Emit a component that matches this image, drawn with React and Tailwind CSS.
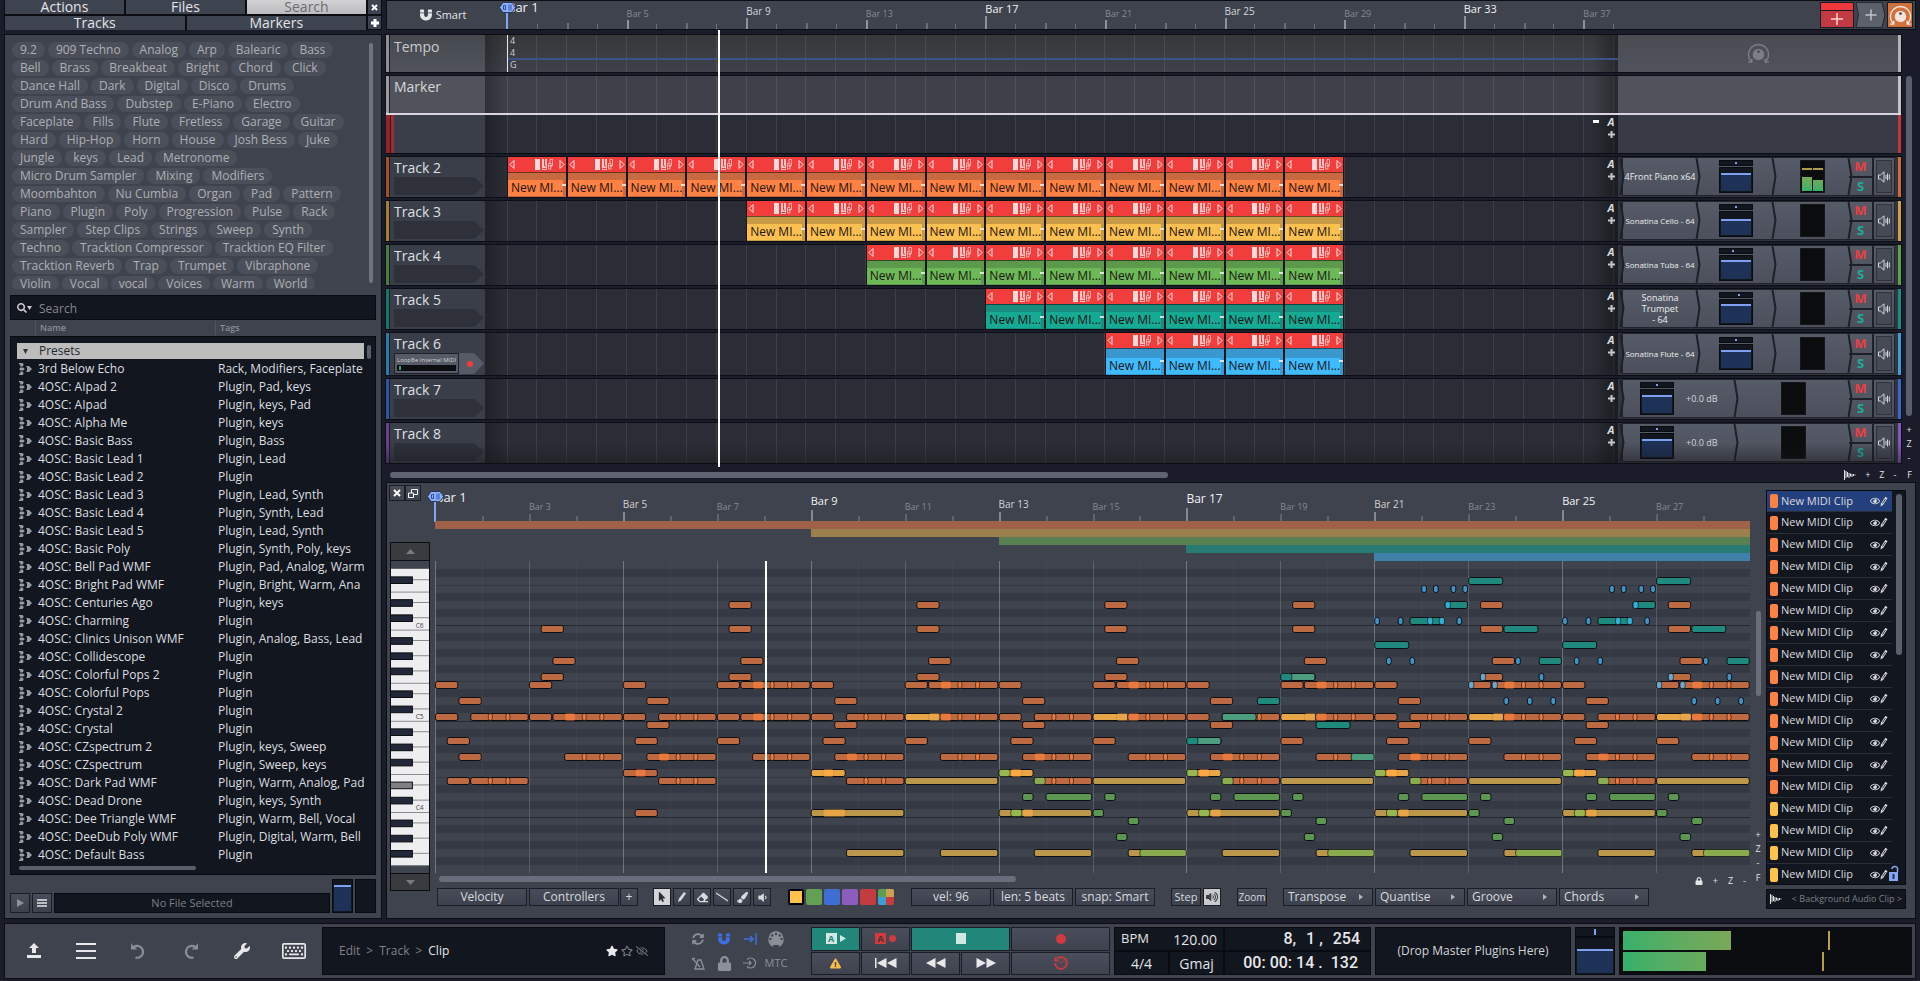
import React from "react";
import {
  FaSearch, FaStar, FaRegStar, FaRegEyeSlash, FaRegKeyboard, FaWrench, FaLock,
  FaExclamationTriangle, FaRegEye, FaEraser,
  FaPaintBrush, FaVolumeDown, FaVolumeUp, FaMousePointer, FaMagnet, FaSyncAlt,
} from "react-icons/fa";

const TAGS = [
  ["9.2", "909 Techno", "Analog", "Arp", "Balearic", "Bass"],
  ["Bell", "Brass", "Breakbeat", "Bright", "Chord", "Click"],
  ["Dance Hall", "Dark", "Digital", "Disco", "Drums"],
  ["Drum And Bass", "Dubstep", "E-Piano", "Electro"],
  ["Faceplate", "Fills", "Flute", "Fretless", "Garage", "Guitar"],
  ["Hard", "Hip-Hop", "Horn", "House", "Josh Bess", "Juke"],
  ["Jungle", "keys", "Lead", "Metronome"],
  ["Micro Drum Sampler", "Mixing", "Modifiers"],
  ["Moombahton", "Nu Cumbia", "Organ", "Pad", "Pattern"],
  ["Piano", "Plugin", "Poly", "Progression", "Pulse", "Rack"],
  ["Sampler", "Step Clips", "Strings", "Sweep", "Synth"],
  ["Techno", "Tracktion Compressor", "Tracktion EQ Filter"],
  ["Tracktion Reverb", "Trap", "Trumpet", "Vibraphone"],
  ["Violin", "Vocal", "vocal", "Voices", "Warm", "World"],
];

const PRESETS = [
  ["3rd Below Echo", "Rack, Modifiers, Faceplate"],
  ["4OSC: AIpad 2", "Plugin, Pad, keys"],
  ["4OSC: AIpad", "Plugin, keys, Pad"],
  ["4OSC: Alpha Me", "Plugin, keys"],
  ["4OSC: Basic Bass", "Plugin, Bass"],
  ["4OSC: Basic Lead 1", "Plugin, Lead"],
  ["4OSC: Basic Lead 2", "Plugin"],
  ["4OSC: Basic Lead 3", "Plugin, Lead, Synth"],
  ["4OSC: Basic Lead 4", "Plugin, Synth, Lead"],
  ["4OSC: Basic Lead 5", "Plugin, Lead, Synth"],
  ["4OSC: Basic Poly", "Plugin, Synth, Poly, keys"],
  ["4OSC: Bell Pad WMF", "Plugin, Pad, Analog, Warm"],
  ["4OSC: Bright Pad WMF", "Plugin, Bright, Warm, Ana"],
  ["4OSC: Centuries Ago", "Plugin, keys"],
  ["4OSC: Charming", "Plugin"],
  ["4OSC: Clinics Unison WMF", "Plugin, Analog, Bass, Lead"],
  ["4OSC: Collidescope", "Plugin"],
  ["4OSC: Colorful Pops 2", "Plugin"],
  ["4OSC: Colorful Pops", "Plugin"],
  ["4OSC: Crystal 2", "Plugin"],
  ["4OSC: Crystal", "Plugin"],
  ["4OSC: CZspectrum 2", "Plugin, keys, Sweep"],
  ["4OSC: CZspectrum", "Plugin, Sweep, keys"],
  ["4OSC: Dark Pad WMF", "Plugin, Warm, Analog, Pad"],
  ["4OSC: Dead Drone", "Plugin, keys, Synth"],
  ["4OSC: Dee Triangle WMF", "Plugin, Warm, Bell, Vocal"],
  ["4OSC: DeeDub Poly WMF", "Plugin, Digital, Warm, Bell"],
  ["4OSC: Default Bass", "Plugin"],
];

const BTN = "flex items-center justify-center border border-[#1a1c26] bg-linear-to-b from-[#484d5a] to-[#3d414d] text-[#d8dade]";
const WELL = "border border-[#090b11] bg-[#12161e]";

/* ---------- Browser panel ---------- */

function TabButton({ children, active }) {
  return (
    <button
      className={
        "h-[14px] flex-1 text-[14px] leading-[14px] " +
        (active ? "bg-linear-to-b from-[#d2d2d4] to-[#bcbcbe] text-[#6b6c70]" : "bg-[#3e4350] text-[#e3e4e7]")
      }
    >
      {children}
    </button>
  );
}

function PresetIcon() {
  return (
    <svg width="14" height="12" viewBox="0 0 14 12" fill="#9a9ca2">
      <path d="M1 0H4C6 .2 6 3 4.200 3.600H2.200V1.500H1z" />
      <path d="M2.500 4.400H5C7 5 7 7 5 7.600H2.500C1.200 7 1.200 5 2.500 4.400z" />
      <path d="M1 12H4C6 11.800 6 9 4.200 8.400H2.200V10.500H1z" />
      <path d="M8 3H11L14 6L11 9H8C9.500 7.500 9.500 4.500 8 3z" />
    </svg>
  );
}

function Browser() {
  return (
    <aside className="flex w-[378px] shrink-0 flex-col">
      <nav className="mb-1 flex flex-col gap-[2px] bg-[#0b0d13] px-px pb-px">
        <div className="flex gap-[2px]">
          <TabButton>Actions</TabButton>
          <TabButton>Files</TabButton>
          <TabButton active>Search</TabButton>
          <button aria-label="Close" className="flex h-[14px] w-[13px] items-center justify-center bg-[#3e4350]">
            <svg width="7" height="7" viewBox="0 0 7 7"><path d="M1 1L6 6M6 1L1 6" stroke="#fff" strokeWidth="2" /></svg>
          </button>
        </div>
        <div className="flex h-[13px] gap-[2px]">
          <TabButton>Tracks</TabButton>
          <TabButton>Markers</TabButton>
          <button aria-label="Add" className="flex h-[13px] w-[13px] items-center justify-center bg-[#3e4350]">
            <svg width="8" height="8" viewBox="0 0 8 8"><path d="M4 0V8M0 4H8" stroke="#fff" strokeWidth="3" /></svg>
          </button>
        </div>
      </nav>
      <div className="flex flex-1 flex-col border border-[#0b0d13] bg-[#3e434e] px-[5px] pt-[7px] pb-1">
        <div className="flex h-[247px] overflow-hidden">
          <div className="flex flex-1 flex-col gap-[2px] pl-[2px]">
            {TAGS.map((row, i) => (
              <div key={i} className="flex gap-[3px]">
                {row.map((t) => (
                  <button key={t} className="h-4 shrink-0 rounded-full bg-[#4b4f5a] px-2 text-[12px] leading-4 whitespace-nowrap text-[#adafb4]">
                    {t}
                  </button>
                ))}
              </div>
            ))}
          </div>
          <div className="mt-px mr-[3px] h-[240px] w-1 rounded-full bg-[#6f7482]" />
        </div>
        <label className={"mt-[6px] flex h-[25px] items-center gap-[7px] px-[6px] " + WELL}>
          <span className="flex items-center text-[#c9cacd]">
            <FaSearch size={10} />
            <svg width="5" height="4" viewBox="0 0 5 4"><path d="M0 0H5L2.500 4z" fill="#c9cacd" /></svg>
          </span>
          <input aria-label="Search presets" placeholder="Search" className="w-full bg-transparent pt-[2px] text-[12px] outline-none placeholder:text-[#85878c]" />
        </label>
        <div className="flex h-4 items-center text-[9px] font-semibold text-[#8b8e96]">
          <span className="ml-[25px] w-[180px] border-l border-[#50545f] pl-1">Name</span>
          <span className="border-l border-[#50545f] pl-1">Tags</span>
        </div>
        <div className={"flex h-[539px] flex-col pt-[6px] pr-1 pl-[6px] " + WELL}>
          <div className="flex">
            <div className="min-w-0 flex-1 overflow-hidden">
              <button className="flex h-4 w-full items-center gap-[11px] bg-[#bdbdbd] pl-[6px] text-[12px] leading-4 text-[#26282c]">
                <svg width="5" height="5" viewBox="0 0 5 5"><path d="M0 0H5L2.500 5z" fill="#333" /></svg>
                Presets
              </button>
              <table className="mt-px w-full table-fixed border-collapse text-[12px] leading-[18px] text-[#dddee0]">
                <tbody>
                  {PRESETS.map(([n, t]) => (
                    <tr key={n} className="h-[18px]">
                      <td className="w-[21px] p-0 pl-px"><PresetIcon /></td>
                      <td className="w-[180px] p-0 whitespace-nowrap">{n}</td>
                      <td className="overflow-hidden p-0 whitespace-nowrap">{t}</td>
                    </tr>
                  ))}
                </tbody>
              </table>
            </div>
            <div className="mt-[2px] ml-[3px] h-[14px] w-1 rounded-full bg-[#5a5f6c]" />
          </div>
          <div className="mt-[2px] ml-[2px] h-1 w-[177px] rounded-full bg-[#5a5f6c]" />
        </div>
        <div className="mt-1 flex items-end gap-[2px]">
          <button aria-label="Play" className={"h-5 w-5 " + BTN}>
            <svg width="7" height="8" viewBox="0 0 7 8"><path d="M0 0L7 4L0 8z" fill="#8e9097" /></svg>
          </button>
          <button aria-label="Menu" className={"h-5 w-5 " + BTN}>
            <svg width="10" height="8" viewBox="0 0 10 8"><path d="M0 1H10M0 4H10M0 7H10" stroke="#e6e6e8" strokeWidth="1.500" /></svg>
          </button>
          <div className={"h-5 flex-1 text-center text-[11px] leading-[18px] text-[#7e8187] " + WELL}>No File Selected</div>
          <div className={"flex h-[34px] w-[21px] flex-col justify-end p-px " + WELL}>
            <div className="h-[26px] border-t-2 border-[#7f9ff0] bg-[#1e3157]" />
          </div>
          <div className={"h-[34px] w-[21px] " + WELL} />
        </div>
      </div>
    </aside>
  );
}

/* ---------- Arranger ---------- */

const BARS_SHOWN = 37.16;
const barPct = (bar) => ((bar - 1) / BARS_SHOWN) * 100 + "%";
const BAR_LIST = Array.from({ length: 38 }, (_, i) => i + 1);

function GridLines() {
  return (
    <svg className="absolute inset-y-0 right-0 left-[22px] h-full w-[calc(100%-22px)]" shapeRendering="crispEdges">
      {BAR_LIST.map((b) => (
        <line key={b} x1={barPct(b)} x2={barPct(b)} y1="0" y2="100%" stroke="#fff" strokeOpacity="0.090" strokeWidth="1" />
      ))}
    </svg>
  );
}

function Triangle({ flip }) {
  return (
    <svg width="6" height="9" viewBox="0 0 6 9" className={flip ? "rotate-180" : ""}>
      <path d="M5 0.500V8.500L1 4.500z" fill="none" stroke="#fff" strokeOpacity="0.850" />
    </svg>
  );
}

function Clip({ body, label }) {
  return (
    <div className="flex h-full min-w-0 flex-1 flex-col border-x border-[#16171c]">
      <div className="flex h-[15px] items-center bg-[#f23d3d] px-px">
        <Triangle />
        <svg width="18" height="11" viewBox="0 0 18 11" className="mr-[6px] ml-auto">
          <path d="M0 0h5v11h-5z" fill="#fff" fillOpacity="0.800" />
          <path d="M7 0h5v11h-5z" fill="#fff" fillOpacity="0.700" />
          <path d="M9.500 0v7h1.500M7.500 9.500h4" stroke="#f23d3d" fill="none" />
          <path d="M13.500 4.500h2.500v5.500h-2.500zM15 4V.5h2.500v6h-2M13 7h4" stroke="#fff" strokeOpacity="0.550" fill="none" />
        </svg>
        <Triangle flip />
      </div>
      <div className={"relative flex flex-1 flex-col justify-end border-t border-[#00000080] " + body}>
        <span className={"mr-[3px] mb-px block h-4 overflow-hidden pl-[3px] text-[12px] leading-4 whitespace-nowrap text-[#1c1410] " + label}>New MI...</span>
        <span className="absolute top-[11px] right-0 h-[2px] w-1 bg-[#ffffffc0]" />
      </div>
    </div>
  );
}

function Lane({ children, bg, automation, minus }) {
  return (
    <div className={"relative h-full min-w-0 flex-1 overflow-hidden " + bg}>
      <GridLines />
      <div className="absolute inset-y-0 left-0 w-[22px] bg-linear-to-r from-[#00000040] to-transparent" />
      <div className="absolute inset-y-0 right-0 w-[26px] bg-linear-to-l from-[#00000060] to-transparent" />
      <div className="relative h-full pl-[22px]">{children}</div>
      {automation && (
        <div className="absolute top-[1px] right-[3px] flex items-start gap-[8px] text-[#d9dadd]">
          {minus && <span className="mt-1 h-[3px] w-[6px] bg-white" />}
          <span className="flex w-2 flex-col items-center">
            <span className="text-[11px] leading-[12px] font-bold italic">A</span>
            <svg width="7" height="7" viewBox="0 0 7 7" className="mt-[3px]"><path d="M3.500 0V7M0 3.500H7" stroke="#c5c7cb" strokeWidth="2" /></svg>
          </span>
        </div>
      )}
    </div>
  );
}

function Fader({ level = 8, pan = "justify-center" }) {
  return (
    <div className="flex w-[34px] flex-col gap-px">
      <div className={"flex h-[6px] items-center px-3 " + WELL + " " + pan}>
        <span className="h-[2px] w-[2px] bg-[#7f9ff0]" />
      </div>
      <div className={"flex h-[26px] flex-col justify-end p-px " + WELL}>
        <div className="border-t-2 border-[#7f9ff0] bg-[#1e3157]" style={{ height: 25 - level }} />
      </div>
    </div>
  );
}

function Chevron({ first }) {
  return (
    <svg width="6" height="38" viewBox="0 0 6 38" preserveAspectRatio="none" className={"h-full shrink-0 " + (first ? "-ml-1" : "")}>
      <path d="M1.500 0L4.500 19L1.500 38" fill="none" stroke="#1d2028" strokeWidth="2" />
    </svg>
  );
}

function Meter({ live }) {
  return (
    <div className="flex h-[33px] w-[25px] items-end gap-px border border-[#14161b] bg-[#0b0c0e] p-px">
      {live && (
        <>
          <div className="flex h-full flex-1 flex-col justify-between pt-[6px]">
            <span className="h-[2px] bg-[#b39b43]" />
            <span className="h-[14px] bg-linear-to-b from-[#79a956] to-[#35b06b]" />
          </div>
          <div className="flex h-full flex-1 flex-col justify-between pt-[6px]">
            <span className="h-[2px] bg-[#b39b43]" />
            <span className="h-[11px] bg-linear-to-b from-[#6bab5a] to-[#35b06b]" />
          </div>
        </>
      )}
    </div>
  );
}

function SpeakerOutline() {
  return (
    <svg width="12" height="12" viewBox="0 0 12 12" fill="none" stroke="#d4d6da" className="shrink-0">
      <path d="M.5 4H2.500L6 .8V11.200L2.500 8H.5zM8 4V8M9.500 2.500V9.500M11.300 3.500V8.500" />
    </svg>
  );
}

function MixerStrip({ track }) {
  const t = track;
  return (
    <div className="flex h-full items-stretch border border-[#20232b] bg-linear-to-b from-[#565b68] to-[#4c505c]">
      <Chevron first />
      {t.plugin ? (
        <>
          <div className={"flex min-w-0 flex-1 flex-col items-center justify-center text-center leading-[11px] whitespace-nowrap text-[#eceded] " + (t.small ? "text-[8px]" : "text-[9px]")}>
            {t.plugin.map((line) => <span key={line}>{line}</span>)}
          </div>
          <Chevron />
          <div className="flex min-w-0 flex-1 items-center justify-center"><Fader level={t.level} pan={t.pan} /></div>
        </>
      ) : (
        <div className="min-w-0 flex-1">
          <div className="flex h-full items-center gap-3 pl-[15px]">
            <Fader level={t.level} />
            <span className="text-[9px] whitespace-nowrap text-[#d5d7da]">+0.0 dB</span>
          </div>
        </div>
      )}
      <Chevron />
      <div className="flex min-w-0 flex-1 items-center justify-center"><Meter live={t.live} /></div>
      <Chevron />
      <div className="-ml-[4px] flex w-[25px] flex-col border-r-2 border-[#1d2028] text-[13px] font-bold">
        <button className="flex flex-1 items-center justify-center border-b border-[#1d2028] leading-none text-[#f03c40]">M</button>
        <button className="flex flex-1 items-center justify-center border-t border-[#1d2028] leading-none text-[#1cae98]">S</button>
      </div>
      <button aria-label="Track output" className="m-[2px] flex w-[16px] items-center justify-center border border-[#2f323c] bg-[#454a56]">
        <SpeakerOutline />
      </button>
    </div>
  );
}

const ORANGE = { body: "bg-[#c8693f]", label: "bg-[#ff8144]" };
const YELLOW = { body: "bg-[#c79a45]", label: "bg-[#fbc04f]" };
const GREEN = { body: "bg-[#5d994d]", label: "bg-[#6db958]" };
const TEAL = { body: "bg-[#198e7f]", label: "bg-[#15aa94]" };
const BLUE = { body: "bg-[#3a98cf]", label: "bg-[#3fbaff]" };

const TRACKS = [
  { name: "Track 2", side: "bg-[#a3502d]", strip: "bg-[#cf6a36]", start: 1, clips: 14, color: ORANGE, plugin: ["4Front Piano x64"], level: 7, live: true },
  { name: "Track 3", side: "bg-[#a67d34]", strip: "bg-[#cda043]", start: 9, clips: 10, color: YELLOW, plugin: ["Sonatina Cello - 64"], small: true, level: 9 },
  { name: "Track 4", side: "bg-[#4a7c3e]", strip: "bg-[#5da04c]", start: 13, clips: 8, color: GREEN, plugin: ["Sonatina Tuba - 64"], small: true, level: 6, pan: "justify-start" },
  { name: "Track 5", side: "bg-[#157768]", strip: "bg-[#159080]", start: 17, clips: 6, color: TEAL, plugin: ["Sonatina", "Trumpet", "- 64"], level: 6, pan: "justify-end" },
  { name: "Track 6", side: "bg-[#2b7aa8]", strip: "bg-[#3a9fd6]", start: 21, clips: 4, color: BLUE, plugin: ["Sonatina Flute - 64"], small: true, level: 7, midi: true },
  { name: "Track 7", side: "bg-[#2d53a5]", strip: "bg-[#3a68cf]", level: 7 },
  { name: "Track 8", side: "bg-[#6d3f92]", strip: "bg-[#8a55bd]", level: 7 },
];

function TrackRow({ track }) {
  const t = track;
  return (
    <div className={"flex shadow-[0_0_0_1px_#0c0e16] " + (t.midi ? "h-[42px]" : "h-10")}>
      <div className={"w-[3px] " + t.side} />
      <div className="ml-px w-[95px] bg-[#3a3e49] pl-1">
        <div className="h-5 text-[14px] leading-[21px] text-[#dfe0e3]">{t.name}</div>
        {t.midi ? (
          <div className="flex h-[21px] w-[90px]">
            <div className="w-[65px] border border-[#1d2028] bg-[#565b67] px-[2px] pt-[2px]">
              <div className="overflow-hidden text-[6px] leading-[9px] whitespace-nowrap text-[#d0d2d5]">LoopBe Internal MIDI</div>
              <div className="h-[6px] bg-[#0c0d10] p-px pl-[2px]"><div className="h-1 w-[2px] bg-[#35a05f]" /></div>
            </div>
            <button aria-label="Record arm" className="flex h-[21px] w-[25px] items-center justify-center bg-[#565b67] pr-1 [clip-path:polygon(0_0,60%_0,100%_50%,60%_100%,0_100%)]">
              <span className="h-[6px] w-[6px] rounded-full bg-[#f03c3f]" />
            </button>
          </div>
        ) : (
          <div className="h-[18px] w-[90px] bg-[#2e313a] [clip-path:polygon(0_0,89%_0,100%_50%,89%_100%,0_100%)]" />
        )}
      </div>
      <Lane bg="bg-[#2b2d36]" automation>
        {t.clips && (
          <div className="flex h-full" style={{ marginLeft: barPct(t.start), width: ((t.clips * 2) / BARS_SHOWN) * 100 + "%" }}>
            {Array.from({ length: t.clips }, (_, i) => (
              <Clip key={i} body={t.color.body} label={t.color.label} />
            ))}
          </div>
        )}
      </Lane>
      <div className="w-[280px] bg-[#32353e] pr-[3px] pb-px pl-1"><MixerStrip track={t} /></div>
      <div className={"w-[3px] " + t.strip} />
    </div>
  );
}

function Knob({ size, color, dot }) {
  return (
    <svg width={size} height={size} viewBox="0 0 24 24" fill="none" stroke={color} strokeWidth="1.500">
      <circle cx="12" cy="13" r="6" fill={color} stroke="none" />
      <circle cx="12" cy="10" r="1.500" fill={dot} stroke="none" />
      <path d="M4 20A10.500 10.500 0 1 1 20 20M1 21H5V17.500M23 21H19V17.500" />
    </svg>
  );
}

function LoopMarker() {
  return (
    <svg width="17" height="11" viewBox="0 0 17 11">
      <path d="M4 0.500H13L16.500 5.500L13 10.500H4L0.500 5.500z" fill="#8aaef8" stroke="#1c2747" strokeWidth="0.800" />
      <path d="M4.500 3.500h2v4h-2z" stroke="#2b4c9a" fill="none" />
      <path d="M9 2.500h4v6h-4z" fill="#5d82d8" />
    </svg>
  );
}

function ruleStyle(bar) {
  if (bar === 1) return { text: "text-[13px] text-[#f2f2f4] top-0", tick: 0 };
  if ((bar - 1) % 16 === 0) return { text: "text-[11px] text-[#f2f2f4] top-[1px]", tick: 13 };
  if ((bar - 1) % 8 === 0) return { text: "text-[10px] text-[#d4d6da] top-[4px]", tick: 11 };
  return { text: "text-[9px] text-[#868a93] top-[6px]", tick: 9 };
}

function ArrangerRuler() {
  return (
    <div className="flex h-[30px] border border-[#0b0d13] bg-[#3e434e]">
      <button className="flex w-[98px] items-center justify-center gap-1 pl-[14px] text-[11px] text-[#e3e4e7]">
        <FaMagnet size={12} />
        Smart
      </button>
      <div className="relative min-w-0 flex-1 pl-[22px]">
        <div className="relative h-full">
          <svg className="absolute inset-0 h-full w-full" shapeRendering="crispEdges">
            {BAR_LIST.map((b) => {
              const main = (b - 1) % 4 === 0;
              const h = main ? ruleStyle(b).tick : (b - 1) % 2 === 0 ? 6 : 5;
              return <rect key={b} x={barPct(b)} y={28 - h} width={(b - 1) % 2 === 0 ? 2 : 1} height={h} fill={main ? "#8f929b" : "#6b6f7a"} />;
            })}
          </svg>
          {BAR_LIST.filter((b) => (b - 1) % 4 === 0).map((b) => (
            <span key={b} className={"absolute leading-[13px] whitespace-nowrap " + ruleStyle(b).text} style={{ left: barPct(b) }}>
              Bar {b}
            </span>
          ))}
          <div className="absolute top-px -left-[8px]"><LoopMarker /></div>
          <div className="absolute top-3 -left-px h-4 w-[2px] bg-[#82a7f5]" />
        </div>
      </div>
      <div className="flex w-[297px] items-start justify-end gap-px pt-px pr-[2px]">
        <button aria-label="Add track" className="flex h-[26px] w-[34px] flex-col border border-[#1a1c24] bg-[#c43a42]">
          <span className="h-[8px] w-full border-b border-[#1a1c24] bg-[#f0383c]" />
          <svg width="12" height="12" viewBox="0 0 12 12" className="m-auto"><path d="M6 0V12M0 6H12" stroke="#f5d5d5" strokeWidth="1.500" /></svg>
        </button>
        <button aria-label="Add plugin">
          <svg width="31" height="26" viewBox="0 0 31 26">
            <path d="M1 .5H27L30 13L27 25.500H1L3.500 13z" fill="#5b606b" stroke="#22252e" />
            <path d="M16 7.500V18.500M10.500 13H21.500" stroke="#c0c3c9" strokeWidth="1.500" />
          </svg>
        </button>
        <button aria-label="Modifiers" className="flex h-[26px] w-[26px] items-center justify-center border border-[#1a1c24] bg-[#d0703c]">
          <Knob size={23} color="#f3e3da" dot="#5a4a40" />
        </button>
      </div>
    </div>
  );
}

function Wave() {
  return (
    <svg width="12" height="10" viewBox="0 0 12 10" className="shrink-0"><path d="M.5 0V10M2 1V8M3.500 2V7M5 3V8M6.500 3.500V6.500M8 4V7M9.500 4V6M11 4.500V5.500" stroke="#e3e4e6" /></svg>
  );
}

function Arranger() {
  return (
    <section>
      <ArrangerRuler />
      <div className="flex">
        <div className="relative flex min-w-0 flex-1 flex-col gap-1 pt-[5px] pb-1">
          <div className="flex h-[37px] shadow-[0_0_0_1px_#0c0e16]">
            <div className="w-[3px] bg-[#8f8f91]" />
            <div className="ml-px w-[95px] bg-linear-to-b from-[#45494f] to-[#50535c] pl-1 text-[14px] leading-[23px] text-[#c9cacd]">Tempo</div>
            <Lane bg="bg-linear-to-b from-[#36383a] to-[#3e4149]">
              <div className="relative h-full border-l border-[#e8e8ea] pl-[2px] text-[9px] leading-3 text-[#cfd0d3]">
                <div>4</div><div>4</div><div>G</div>
                <div className="absolute inset-x-0 top-[23px] h-[2px] bg-[#3a5288]" />
              </div>
            </Lane>
            <div className="flex w-[280px] items-center justify-center bg-linear-to-b from-[#494c52] to-[#50535c]"><Knob size={23} color="#7b7e84" dot="#4c4f56" /></div>
            <div className="w-[3px] bg-[#b3b3b5]" />
          </div>
          <div className="flex h-[37px] shadow-[0_0_0_1px_#0c0e16]">
            <div className="w-[3px] bg-[#9c9c9e]" />
            <div className="ml-px w-[95px] bg-[#50535c] pl-1 text-[14px] leading-[22px] text-[#d6d7da]">Marker</div>
            <Lane bg="bg-[#3e4149]" />
            <div className="w-[280px] bg-[#50535c]" />
            <div className="w-[3px] bg-[#c3c3c5]" />
          </div>
          <div className="-mt-1 border-t-2 border-[#d9d4e0]">
            <div className="flex h-[38px] shadow-[0_1px_0_0_#0c0e16]">
              <div className="w-[4px] bg-[#8d262b]" />
              <div className="ml-px w-[94px] border-l-3 border-[#a62a30] bg-[#3a3e49]" />
              <Lane bg="bg-[#2b2d36]" automation minus />
              <div className="w-[280px] bg-[#383b46]" />
              <div className="w-[3px] bg-[#c4343a]" />
            </div>
          </div>
          {TRACKS.map((t) => <TrackRow key={t.name} track={t} />)}
          <div className="pointer-events-none absolute inset-x-0 bottom-1 h-5 bg-linear-to-t from-[#15161870] to-transparent" />
          <div className="pointer-events-none absolute top-0 right-[283px] bottom-0 left-[121px]">
            <div className="absolute inset-y-0 w-[2px] bg-white" style={{ left: barPct(8.06) }} />
          </div>
        </div>
        <div className="flex w-[15px] flex-col items-center pt-[46px] pr-[1px] pl-[2px] text-[9px] text-[#e3e4e6]">
          <div className="h-[340px] w-[6px] rounded-full bg-[#5a5f6c]" />
          <div className="mt-[7px] flex flex-col items-center leading-[14px]"><span>+</span><span>Z</span><span>-</span></div>
        </div>
      </div>
      <div className="flex h-[15px] items-center justify-between pl-1 text-[9px] text-[#e3e4e6]">
        <div className="h-[6px] w-[51%] rounded-full bg-[#5f6372]" />
        <div className="flex items-center gap-[9px] pr-1"><Wave /><span>+</span><span>Z</span><span>-</span><span className="ml-[2px]">F</span></div>
      </div>
    </section>
  );
}

/* ---------- Piano roll ---------- */

const BEATS = 112;
const beatPct = (b) => (b / BEATS) * 100 + "%";

const INK = {
  o: "#bd6a43", O: "#e97a3f", y: "#ba974a", Y: "#e8a548", A: "#fba845", g: "#5d9651", l: "#8bab50", L: "#97b752",
  t: "#20897e", T: "#4c9c7e", b: "#3f93c6", B: "#33aed6", s: "#6ca6c9",
};

/* Each note: [row, start beat, end beat, ink, flush] where flush notes sit on top of a longer note. */
function tail(row, s) {
  return [[row, s, s + 5, "o"], [row, s + 1.5, s + 1.9, "O", 1], [row, s + 3, s + 3.4, "O", 1]];
}
function longTail(row, s) {
  return [[row, s, s + 6, "o"], [row, s + 1, s + 2, "O", 1], [row, s + 2.5, s + 2.9, "O", 1], [row, s + 4, s + 4.4, "O", 1]];
}
function melody(o) {
  return [
    [15, o, o + 2, "o"], [17, o + 2, o + 4, "o"], [19, o, o + 2, "o"], ...tail(19, o + 3), [20, o + 2, o + 4, "o"],
    [22, o + 1, o + 3, "o"], ...longTail(24, o + 2),
  ];
}
function answer(o) {
  return [
    [5, o + 1, o + 3, "o"], [8, o + 1, o + 3, "o"], [12, o + 2, o + 4, "o"], [14, o + 1, o + 3, "o"],
    [15, o, o + 2, "o"], ...longTail(15, o + 2), [22, o, o + 2, "o"], ...tail(24, o + 3),
  ];
}
function cello(o) {
  return [
    [19, o, o + 3, "Y"], [19, o + 2, o + 3, "Y", 1], [19, o + 3, o + 8, "o"], [19, o + 3, o + 4, "O", 1],
    [19, o + 4.5, o + 4.9, "O", 1], [19, o + 6, o + 6.4, "O", 1], [27, o, o + 8, "y"],
  ];
}
function tuba(o) {
  return [
    [26, o, o + 3, "Y"], [26, o, o + 1, "L", 1], [26, o + 1, o + 2, "A", 1], ...tail(27, o + 3), [27, o + 3, o + 4, "l", 1],
    [29, o + 2, o + 3, "g"], [29, o + 4, o + 8, "g"], [31, o, o + 8, "y"], [31, o + 1, o + 2, "L", 1], [31, o + 2, o + 3, "Y", 1],
    [36, o + 3, o + 8, "y"], [29, o + 9, o + 10, "g"], [31, o + 8, o + 9, "g"], [32, o + 11, o + 12, "g"],
    [34, o + 10, o + 11, "g"], [36, o + 11, o + 16, "y"], [36, o + 12, o + 16, "l", 1],
  ];
}
function flute(o) {
  const hit = (row, s, ink = "b", flush) => [row, s, s + 0.5, ink, flush];
  return [
    [10, o, o + 3, "t"], [7, o + 3, o + 6, "t"], hit(7, o + 4.5, "B", 1), hit(7, o + 5.5, "B", 1), hit(7, o), hit(7, o + 2), hit(7, o + 7),
    hit(3, o + 4), hit(3, o + 5), hit(3, o + 6.5), hit(3, o + 7.5), [5, o + 6, o + 8, "t"], hit(5, o + 6, "B", 1),
    [2, o + 8, o + 11, "t"], [8, o + 11, o + 14, "t"], hit(12, o + 1), hit(12, o + 3), hit(12, o + 12), [12, o + 14, o + 16, "t"],
    hit(14, o + 9, "s", 1), hit(14, o + 14), hit(15, o + 8, "s", 1), hit(15, o + 10, "s", 1),
    hit(17, o + 11), hit(17, o + 13), hit(17, o + 15),
  ];
}

const NOTES = [
  [15, 0, 2, "o"], [17, 2, 4, "o"], [19, 0, 2, "o"], ...tail(19, 3), [22, 1, 3, "o"], [24, 2, 4, "o"], [27, 1, 3, "o"], ...tail(27, 3),
  [8, 9, 11, "o"], [12, 10, 12, "o"], [14, 9, 11, "o"], [15, 8, 10, "o"], [19, 8, 10, "o"], ...longTail(19, 10), ...tail(24, 11),
  ...melody(16), [26, 16, 19, "o"], [26, 17, 18, "O", 1], ...tail(27, 19), [31, 17, 19, "o"],
  ...answer(24), [19, 24, 26, "o"], ...longTail(19, 26),
  ...melody(32), [26, 32, 35, "Y"], [26, 33, 34, "A", 1], ...tail(27, 35), [31, 32, 40, "y"], [31, 33, 35, "Y", 1], [36, 35, 40, "y"],
  ...answer(40), ...cello(40), [36, 43, 48, "y"],
  ...[48, 64, 80, 96].flatMap((o) => [...melody(o), ...answer(o + 8), ...cello(o + 8), ...tuba(o)]),
  [22, 64, 67, "T"], [22, 64, 65, "t", 1], [17, 70, 72, "t"], [19, 67, 70, "T"], [14, 72, 75, "T"], [14, 72, 73, "t", 1],
  [20, 75, 78, "t"], [24, 78, 80, "T", 1],
  ...flute(80), ...flute(96),
];

function noteStroke([, s, e, ink, flush]) {
  if (!flush) return 1;
  return e - s > 0.5 && "OAY".includes(ink) ? 0.1 : 0.6;
}

const BLACK = new Set([1, 4, 6, 9, 11, 13, 16, 18, 21, 23, 25, 28, 30, 33, 35, 37]);
const ROWS = Array.from({ length: 39 }, (_, i) => i);

function Roll() {
  return (
    <svg className="block h-[312px] w-full">
      <g shapeRendering="crispEdges">
        {ROWS.filter((r) => BLACK.has(r)).map((r) => <rect key={r} x="0" width="100%" y={r * 8} height="8" fill="#353944" />)}
        {[8, 20, 32].map((r) => <rect key={r} x="0" width="100%" y={r * 8} height="1" fill="#252831" />)}
        {[3, 15, 27].map((r) => <rect key={r} x="0" width="100%" y={r * 8} height="1" fill="#343843" />)}
        {Array.from({ length: 28 }, (_, i) => (
          <rect key={i} x={beatPct(i * 4)} y="0" width="1" height="312" fill="#fff" fillOpacity={i % 4 === 0 ? 0.28 : i % 2 === 0 ? 0.16 : 0.03} />
        ))}
      </g>
      {NOTES.map((note, i) => {
        const [row, s, e, ink, flush] = note;
        return (
          <rect key={i} x={beatPct(s + 0.04)} y={row * 8 + 0.5} width={beatPct(e - s - (flush ? 0.06 : 0.1))} height="7" rx="2" fill={INK[ink]} stroke="#0d0e12" strokeOpacity={noteStroke(note)} />
        );
      })}
    </svg>
  );
}

function Piano() {
  const labels = { 7: "C6", 19: "C5", 31: "C4" };
  return (
    <svg width="40" height="312" viewBox="0 0 40 312" className="block border-x border-[#0b0d13]">
      <rect width="40" height="312" fill="#eeeef0" />
      {ROWS.map((r) => {
        if (BLACK.has(r)) return <rect key={r} x="22" y={r * 8 + 3} width="18" height="1" fill="#85858c" />;
        if (!BLACK.has(r + 1)) return <rect key={r} x="0" y={(r + 1) * 8} width="40" height="1" fill="#85858c" />;
        return null;
      })}
      {ROWS.filter((r) => BLACK.has(r)).map((r) => (
        <rect key={"b" + r} x="-1" y={r * 8 + 0.5} width="23.500" height="7" fill={r === 28 ? "#808082" : "#23273a"} stroke="#06070b" />
      ))}
      {Object.entries(labels).map(([r, l]) => (
        <text key={l} x="26" y={r * 8 + 6} fontSize="7" fill="#44464e">{l}</text>
      ))}
    </svg>
  );
}

const STRIPS = [
  [1, "bg-[#9f6148]"], [9, "bg-[#9b804d]"], [13, "bg-[#588052]"], [17, "bg-[#277b73]"], [21, "bg-[#3f80a8]"],
];

function editorRule(bar) {
  if (bar === 1) return { text: "text-[13px] text-[#f2f2f4] top-[6px]", tick: 0 };
  if (bar === 17) return { text: "text-[12px] text-[#f2f2f4] top-[8px]", tick: 13 };
  if ((bar - 1) % 8 === 0) return { text: "text-[11px] text-[#f2f2f4] top-[10px]", tick: 11 };
  if ((bar - 1) % 4 === 0) return { text: "text-[10px] text-[#d0d2d6] top-[13px]", tick: 9 };
  return { text: "text-[9px] text-[#868a93] top-[16px]", tick: 7 };
}

const NEW_CLIPS = Array.from({ length: 18 }, (_, i) => (i < 14 ? "bg-[#ff8144]" : "bg-[#ffc24d]"));

function ClipList() {
  return (
    <div className="mt-[7px] mr-[9px] flex w-[140px] shrink-0 flex-col">
      <div className={"relative flex h-[395px] overflow-hidden " + WELL}>
        <ul className="flex-1">
          {NEW_CLIPS.map((c, i) => (
            <li key={i} className={"flex items-center border-b border-[#2c2f38] pr-1 pl-[3px] text-[11px] text-[#d8dade] " + (i === 0 ? "h-[21px] bg-[#24407c]" : "h-[22px]")}>
              <span className={"mr-[3px] h-[14px] w-2 rounded-[2px] " + c} />
              <span className="flex-1 whitespace-nowrap">New MIDI Clip</span>
              <FaRegEye size={10} />
              <svg width="8" height="11" viewBox="0 0 8 11"><path d="M0.500 10.500L1 7.500L5.500 .8L7.500 2.200L3 9z" fill="#d8dade" /><path d="M2.500 7.500L5.500 3" stroke="#12161e" strokeWidth=".8" /></svg>
            </li>
          ))}
        </ul>
        <div className="mt-[3px] mr-[3px] ml-1 h-[161px] w-[6px] rounded-full bg-[#5a5f6c]" />
        <button aria-label="Unlock" className="absolute right-[6px] bottom-[2px]">
          <svg width="11" height="17" viewBox="0 0 11 17">
            <path d="M4 4V3A3 2.500 0 0 1 9.500 3V7" fill="none" stroke="#85a8f5" strokeWidth="1.500" />
            <rect x="1" y="7" width="9" height="9" fill="#85a8f5" />
            <path d="M5.500 9V14" stroke="#1e3157" strokeWidth="2" />
          </svg>
        </button>
      </div>
      <div className={"mt-[4px] flex h-5 items-center justify-between px-[3px] text-[9px] whitespace-nowrap text-[#7c7f86] " + WELL}>
        <Wave />
        <span>&lt; Background Audio Clip &gt;</span>
      </div>
    </div>
  );
}

function ToolButton({ label, active, children }) {
  return (
    <button aria-label={label} className={active ? "flex h-[18px] w-[18px] items-center justify-center border border-[#1a1c26] bg-[#d4d5d8] text-[#2b2d33]" : "h-[18px] w-[18px] " + BTN}>
      {children}
    </button>
  );
}

function EditorToolbar() {
  const sw = "h-4 w-4 rounded-[2px] ";
  return (
    <div className="mt-[5px] ml-[50px] flex h-[18px] items-center text-[12px] whitespace-nowrap">
      <div className="flex gap-[2px]">
        <button className={"h-[18px] w-[90px] " + BTN}>Velocity</button>
        <button className={"h-[18px] w-[90px] " + BTN}>Controllers</button>
        <button className={"-ml-px h-[18px] w-[18px] " + BTN}>+</button>
      </div>
      <div className="ml-[15px] flex gap-[2px]">
        <ToolButton label="Select" active><FaMousePointer size={10} /></ToolButton>
        <ToolButton label="Pencil">
          <svg width="10" height="12" viewBox="0 0 10 12"><path d="M1 11L2 7.500L7 1L9 2.500L4 9.500z" fill="#d8dade" /></svg>
        </ToolButton>
        <ToolButton label="Erase"><FaEraser size={11} /></ToolButton>
        <ToolButton label="Line">
          <svg width="12" height="10" viewBox="0 0 12 10"><path d="M0 1L12 9" stroke="#d8dade" strokeWidth="1.200" /></svg>
        </ToolButton>
        <ToolButton label="Paint"><FaPaintBrush size={11} /></ToolButton>
        <ToolButton label="Audition"><FaVolumeDown size={11} /></ToolButton>
      </div>
      <div className="ml-[17px] flex gap-[2px]">
        <button aria-label="Yellow" className={sw + "border-2 border-black bg-[#ffc24a]"} />
        <button aria-label="Green" className={sw + "bg-[#64a054]"} />
        <button aria-label="Blue" className={sw + "bg-[#3e6dd4]"} />
        <button aria-label="Purple" className={sw + "bg-[#8c5dbd]"} />
        <button aria-label="Red" className={sw + "bg-[#c43b40]"} />
        <button aria-label="By track" className={sw + "grid grid-cols-2 overflow-hidden"}>
          <span className="h-2 bg-[#5f9c50]" /><span className="h-2 bg-[#cda24e]" />
          <span className="h-2 bg-[#3f9dd6]" /><span className="h-2 bg-[#c43b40]" />
        </button>
      </div>
      <div className="ml-[17px] flex gap-[2px]">
        <button className={"h-[18px] w-20 " + BTN}>vel: 96</button>
        <button className={"h-[18px] w-20 " + BTN}>len: 5 beats</button>
        <button className={"h-[18px] w-20 " + BTN}>snap: Smart</button>
      </div>
      <button className={"ml-4 h-[18px] w-[30px] text-[11px] " + BTN}>Step</button>
      <button aria-label="Step audio" className="ml-[2px] flex h-[18px] w-[18px] items-center justify-center border border-[#1a1c26] bg-[#c9cacd] text-[#3c3f48]"><FaVolumeUp size={12} /></button>
      <button className={"ml-4 h-[18px] w-[30px] text-[10px] " + BTN}>Zoom</button>
      <div className="ml-4 flex gap-[2px]">
        {["Transpose", "Quantise", "Groove", "Chords"].map((m) => (
          <button key={m} className="flex h-[18px] w-[90px] items-center justify-between border border-[#1a1c26] bg-linear-to-b from-[#484d5a] to-[#3d414d] pr-[9px] pl-1 text-[#d8dade]">
            {m}
            <svg width="4" height="6" viewBox="0 0 4 6"><path d="M0 0L4 3L0 6z" fill="#b3b5ba" /></svg>
          </button>
        ))}
      </div>
    </div>
  );
}

function Editor() {
  return (
    <section className="flex flex-1 border border-[#0b0d13] bg-[#3e434e]">
      <div className="min-w-0 flex-1">
        <div className="flex h-[38px] pl-[2px]">
          <div className="flex w-[46px] items-start pt-[2px]">
            <button aria-label="Close editor" className={"h-4 w-4 " + BTN}>
              <svg width="8" height="8" viewBox="0 0 8 8"><path d="M1 1L7 7M7 1L1 7" stroke="#fff" strokeWidth="2" /></svg>
            </button>
            <button aria-label="Detach editor" className={"h-4 w-4 " + BTN}>
              <svg width="10" height="9" viewBox="0 0 10 9" fill="none" stroke="#fff"><path d="M.5 4h5v4.500h-5zM3.500 4V.5h6v5h-4" /></svg>
            </button>
          </div>
          <div className="relative mr-4 min-w-0 flex-1">
            <svg className="absolute inset-0 h-full w-full" shapeRendering="crispEdges">
              {Array.from({ length: 28 }, (_, i) => {
                const h = i % 2 === 0 ? editorRule(i + 1).tick : 5;
                return <rect key={i} x={beatPct(i * 4)} y={38 - h} width="2" height={h} fill={i % 4 === 0 ? "#858892" : "#5f636f"} />;
              })}
            </svg>
            {Array.from({ length: 14 }, (_, i) => i * 2 + 1).map((b) => (
              <span key={b} className={"absolute leading-[16px] whitespace-nowrap " + editorRule(b).text} style={{ left: beatPct((b - 1) * 4) }}>Bar {b}</span>
            ))}
            <div className="absolute top-[8px] -left-[8px]"><LoopMarker /></div>
            <div className="absolute top-[19px] -left-px h-5 w-[2px] bg-[#82a7f5]" />
          </div>
        </div>
        <div className="flex pl-[3px]">
          <div className="flex w-10 shrink-0 flex-col pt-[21px]">
            <button aria-label="Scroll up" className="flex h-[19px] items-center justify-center border border-[#0b0d13] bg-[#3a3b3f]">
              <svg width="9" height="5" viewBox="0 0 9 5"><path d="M0 5L4.500 0L9 5z" fill="#767a84" /></svg>
            </button>
            <Piano />
            <button aria-label="Scroll down" className="flex h-[18px] items-center justify-center border border-[#0b0d13] bg-[#3a3b3f]">
              <svg width="9" height="5" viewBox="0 0 9 5"><path d="M0 0L4.500 5L9 0z" fill="#767a84" /></svg>
            </button>
          </div>
          <div className="relative ml-[5px] min-w-0 flex-1">
            <div className="flex h-10 flex-col items-end">
              {STRIPS.map(([bar, c]) => (
                <div key={bar} className={"h-2 " + c} style={{ width: ((29 - bar) / 28) * 100 + "%" }} />
              ))}
            </div>
            <Roll />
            <div className="absolute top-10 h-[312px] w-[2px] bg-white" style={{ left: beatPct(28.1) }} />
            <div className="flex h-[16px] items-start justify-between pt-[3px] pl-1 text-[9px] text-[#e3e4e6]">
              <div className="h-[6px] w-[44%] rounded-full bg-[#6a6e7c]" />
              <div className="flex items-center gap-[10px] pr-1 leading-[10px]"><FaLock size={8} /><span>+</span><span>Z</span><span>-</span></div>
            </div>
          </div>
          <div className="flex w-4 shrink-0 flex-col items-center pt-[90px] text-[9px] leading-[14px] text-[#e3e4e6]">
            <div className="h-[85px] w-[5px] rounded-full bg-[#6a6e7c]" />
            <span className="mt-[132px]">+</span><span>Z</span><span>-</span><span className="mt-px">F</span>
          </div>
        </div>
        <div className="-mt-[8px]"><EditorToolbar /></div>
      </div>
      <ClipList />
    </section>
  );
}

/* ---------- Footer ---------- */

function NavIcon({ label, dim, children }) {
  return <button aria-label={label} className={"flex w-[52px] items-center justify-center " + (dim ? "text-[#8b8e95]" : "text-[#e8e8ea]")}>{children}</button>;
}

const KEY = "flex items-center justify-center border border-[#1a1c26] ";
const KEY_DARK = KEY + "bg-linear-to-b from-[#4a4e5b] to-[#3f434f] text-[#e8e8ea]";
const KEY_TEAL = KEY + "bg-[#20877a] text-[#d2e8e3]";

function Footer() {
  return (
    <footer className="flex h-[56px] border border-[#0b0d13] bg-[#3e434e] p-[3px]">
      <nav className="mr-[2px] flex">
        <NavIcon label="Export">
          <svg width="14" height="16" viewBox="0 0 14 16" fill="currentColor"><path d="M7 0L12 5H9V10H5V5H2zM0 12H14V15H0z" /></svg>
        </NavIcon>
        <NavIcon label="Menu">
          <svg width="20" height="16" viewBox="0 0 20 16"><path d="M0 1H20M0 8H20M0 15H20" stroke="currentColor" strokeWidth="2" /></svg>
        </NavIcon>
        <NavIcon label="Undo" dim>
          <svg width="17" height="17" viewBox="0 0 17 17"><path d="M1 0V6.500H7.500L5 4.500A4.800 4.800 0 1 1 6 13.500L5 15.500A7 7 0 1 0 3.300 3z" fill="currentColor" /></svg>
        </NavIcon>
        <NavIcon label="Redo" dim>
          <svg width="17" height="17" viewBox="0 0 17 17" className="-scale-x-100"><path d="M1 0V6.500H7.500L5 4.500A4.800 4.800 0 1 1 6 13.500L5 15.500A7 7 0 1 0 3.300 3z" fill="currentColor" /></svg>
        </NavIcon>
        <NavIcon label="Settings"><FaWrench size={16} /></NavIcon>
        <NavIcon label="Keyboard"><FaRegKeyboard size={24} /></NavIcon>
      </nav>
      <div className={"flex h-12 w-[343px] items-center px-4 text-[12px] text-[#7f8288] " + WELL}>
        <a href="#edit">Edit</a><span className="mx-[6px]">&gt;</span><a href="#track">Track</a><span className="mx-[6px]">&gt;</span><a href="#clip" className="text-[#e8e8ea]">Clip</a>
        <span className="ml-auto flex items-center gap-[3px]"><FaStar size={12} className="text-[#e8e8ea]" /><FaRegStar size={12} /><FaRegEyeSlash size={12} /></span>
      </div>
      <div className="mr-[22px] ml-5 grid grid-cols-[26px_26px_26px_26px] grid-rows-2 place-items-center text-[#8d9098]">
        <FaSyncAlt size={12} />
        <FaMagnet size={12} className="text-[#3e6fe0]" />
        <svg width="13" height="12" viewBox="0 0 13 12" fill="none" stroke="#3e6fe0" strokeWidth="1.500"><path d="M0 6H9M6 3L9 6L6 9M12 0V12" /></svg>
        <svg width="18" height="17" viewBox="0 0 18 17">
          <path d="M9 0A8.500 8.500 0 0 1 12 16V14H6V16A8.500 8.500 0 0 1 9 0z" fill="#8d9098" />
          <g fill="#3e434e"><circle cx="3.500" cy="8" r="1.200" /><circle cx="5.200" cy="4.500" r="1.200" /><circle cx="9" cy="3" r="1.200" /><circle cx="12.800" cy="4.500" r="1.200" /><circle cx="14.500" cy="8" r="1.200" /></g>
        </svg>
        <svg width="13" height="13" viewBox="0 0 13 13" fill="none" stroke="#8d9098" strokeWidth="1.300"><path d="M3 12L6 3H9L12 12zM0 1L8 10M0 3L3 1" /></svg>
        <FaLock size={15} />
        <svg width="14" height="12" viewBox="0 0 14 12" fill="none" stroke="#8d9098" strokeWidth="1.200"><path d="M4 2.500A5 5 0 1 1 4 9.500M0 6H8M6 4L8 6L6 8" /></svg>
        <span className="text-[11px]">MTC</span>
      </div>
      <div className="grid h-12 grid-cols-[49px_49px_49px_49px_99px] grid-rows-2 gap-x-px gap-y-px">
        <button aria-label="Play all" className={KEY_TEAL + " gap-[3px]"}>
          <span className="flex h-[11px] w-[11px] items-center justify-center bg-[#d2e8e3] text-[9px] leading-none font-bold text-[#20877a]">A</span>
          <svg width="6" height="7" viewBox="0 0 6 7"><path d="M0 0L6 3.500L0 7z" fill="currentColor" /></svg>
        </button>
        <button aria-label="Record automation" className={KEY_DARK + " gap-[3px]"}>
          <span className="flex h-[11px] w-[11px] items-center justify-center bg-[#d23a3f] text-[9px] leading-none font-bold text-[#43303a]">A</span>
          <span className="h-[7px] w-[7px] rounded-full bg-[#d23a3f]" />
        </button>
        <button aria-label="Stop" className={KEY_TEAL + " col-span-2"}><span className="h-[11px] w-[10px] bg-[#d2e8e3]" /></button>
        <button aria-label="Record" className={KEY_DARK}><span className="h-[10px] w-[10px] rounded-full bg-[#d23a3f]" /></button>
        <button aria-label="Panic" className={KEY_DARK}><FaExclamationTriangle size={11} className="text-[#f7bd49]" /></button>
        <button aria-label="To start" className={KEY_DARK}>
          <svg width="22" height="10" viewBox="0 0 22 10" fill="currentColor"><path d="M0 0H1.500V10H0zM11.500 0V10L2 5zM21.500 0V10L12 5z" /></svg>
        </button>
        <button aria-label="Rewind" className={KEY_DARK}>
          <svg width="20" height="10" viewBox="0 0 20 10" fill="currentColor"><path d="M9.500 0V10L0 5zM19.500 0V10L10 5z" /></svg>
        </button>
        <button aria-label="Forward" className={KEY_DARK}>
          <svg width="20" height="10" viewBox="0 0 20 10" fill="currentColor"><path d="M.5 0V10L10 5zM10.500 0V10L20 5z" /></svg>
        </button>
        <button aria-label="Retrospective record" className={KEY_DARK}>
          <svg width="14" height="14" viewBox="0 0 14 14" fill="none" stroke="#d23a3f">
            <path d="M2.500 3A6 6 0 1 1 1 7M1 1.500V4.500H4.500" strokeWidth="1.600" />
            <circle cx="7" cy="7" r="4" strokeDasharray="1 1.500" />
            <path d="M7 7.500L9.500 4.500M7 7.500L5 6" />
          </svg>
        </button>
      </div>
      <div className="ml-1 grid h-12 w-[110px] grid-cols-2 grid-rows-2 text-[14px] text-[#e3e4e7]">
        <div className={"col-span-2 flex items-center justify-between px-[6px] " + WELL}><span className="text-[13px]">BPM</span><span>120.00</span></div>
        <div className={"flex items-center justify-center " + WELL}>4/4</div>
        <div className={"flex items-center justify-center " + WELL}>Gmaj</div>
      </div>
      <div className="grid h-12 w-[147px] grid-rows-2 font-[Roboto,sans-serif] text-[16px] font-medium text-[#e8e8ea]">
        <div className={"flex items-center justify-end gap-[10px] pr-[10px] " + WELL}><span>8,</span><span>1 ,</span><span>254</span></div>
        <div className={"flex items-center justify-end gap-[4px] pr-3 " + WELL}><span>00:</span><span>00:</span><span>14</span><span>.</span><span className="ml-1">132</span></div>
      </div>
      <div className={"ml-1 flex h-12 w-[196px] shrink-0 items-center justify-center text-[12px] whitespace-nowrap text-[#d3d5d8] " + WELL}>(Drop Master Plugins Here)</div>
      <div className="ml-1 flex w-10 flex-col">
        <div className={"flex h-[10px] items-center justify-center " + WELL}><span className="h-[6px] w-[2px] bg-[#7f9ff0]" /></div>
        <div className={"flex flex-1 flex-col justify-end p-px " + WELL}><div className="h-[24px] border-t-2 border-[#7f9ff0] bg-[#1e3157]" /></div>
      </div>
      <div className="ml-1 grid flex-1 grid-rows-2 gap-y-[2px] border border-[#090b11] bg-[#0b0c0f] p-[3px]">
        <div className="flex"><span className="w-[38%] bg-linear-to-r from-[#35b06b] to-[#7aa757]" /><span className="ml-[34%] w-[2px] bg-[#b8a043]" /></div>
        <div className="flex"><span className="w-[29%] bg-linear-to-r from-[#35b06b] to-[#69aa5c]" /><span className="ml-[41%] w-[2px] bg-[#b8a043]" /></div>
      </div>
    </footer>
  );
}

export default function App() {
  return (
    <div className="flex min-h-screen flex-col gap-1 bg-[#1a1d29] px-1 pb-[2px] font-['Open_Sans',sans-serif] select-none">
      <div className="flex flex-1 gap-1">
        <Browser />
        <main className="flex min-w-0 flex-1 flex-col">
          <Arranger />
          <Editor />
        </main>
      </div>
      <Footer />
    </div>
  );
}
